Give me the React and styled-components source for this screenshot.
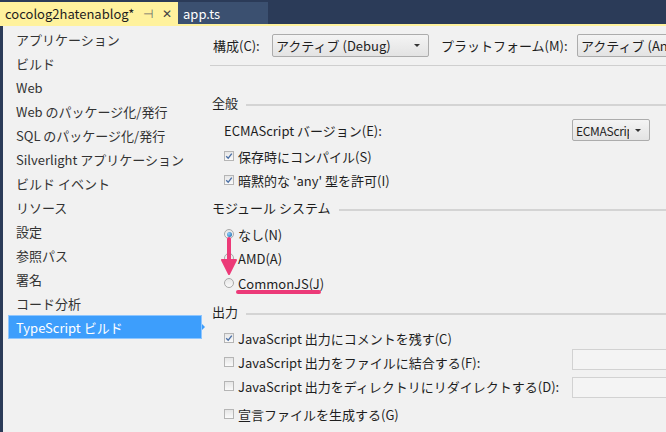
import React from "react";
import styled, { createGlobalStyle } from "styled-components";

const Global = createGlobalStyle`
  html, body { margin: 0; padding: 0; }
  body {
    width: 666px;
    height: 432px;
    overflow: hidden;
    background: #2b3b58;
    font-family: "Noto Sans CJK JP", "Noto Sans", sans-serif;
    font-size: 13px;
    color: #1e1e1e;
  }
`;

const Frame = styled.div`
  width: 666px;
  height: 432px;
  display: flex;
  flex-direction: column;
`;

const TabBar = styled.div`
  height: 24px;
  display: flex;
  align-items: flex-end;
  background: #2b3b58;
`;

const Tab = styled.div`
  height: 22px;
  display: flex;
  align-items: center;
  gap: 9px;
  padding: 0 8px 0 5px;
  background: ${(p) => (p.$active ? "#fff29d" : "#3b5070")};
  color: ${(p) => (p.$active ? "#1e1e1e" : "#ffffff")};
  width: ${(p) => p.$w}px;
  box-sizing: border-box;
  font-size: 13px;
`;

const TabTitle = styled.span`
  flex: 1;
  white-space: nowrap;
`;

const TabIcon = styled.span`
  color: ${(p) => p.$color || "#6a6a6a"};
  font-size: 12px;
  line-height: 1;
`;

const YellowRule = styled.div`
  height: 2px;
  background: #fff29d;
`;

const Body = styled.div`
  flex: 1;
  display: flex;
  background: #f1f1f1;
  border-left: 3px solid #2b3b58;
  min-height: 0;
`;

const Sidebar = styled.ul`
  list-style: none;
  margin: 0;
  padding: 1px 0 0 5px;
  width: 202px;
  flex: none;
`;

const SideItem = styled.li`
  position: relative;
  height: 24px;
  display: flex;
  align-items: center;
  padding-left: 7px;
  margin-right: 8px;
  white-space: nowrap;
  color: ${(p) => (p.$selected ? "#ffffff" : "#333333")};
  background: ${(p) => (p.$selected ? "#3d9efc" : "transparent")};
  border: 1px solid ${(p) => (p.$selected ? "#8ec6ff" : "transparent")};
  box-sizing: border-box;

  &::after {
    content: ${(p) => (p.$selected ? '""' : "none")};
    position: absolute;
    right: -4px;
    top: 50%;
    margin-top: -3px;
    border-left: 3px solid #3d9efc;
    border-top: 3px solid transparent;
    border-bottom: 3px solid transparent;
  }
`;

const Content = styled.div`
  flex: 1;
  display: flex;
  flex-direction: column;
  overflow: hidden;
`;

const Toolbar = styled.div`
  height: 39px;
  display: flex;
  align-items: center;
  padding-left: 3px;
  border-bottom: 1px solid #cfcfcf;
  white-space: nowrap;
  flex: none;
`;

const ToolLabel = styled.span`
  width: ${(p) => p.$w}px;
  flex: none;
`;

const Select = styled.div`
  width: ${(p) => p.$w}px;
  height: ${(p) => p.$h || 23}px;
  box-sizing: border-box;
  border: 1px solid #acacac;
  border-radius: 2px;
  background: linear-gradient(#f4f4f4, #e3e3e3);
  display: flex;
  align-items: center;
  padding-left: 3px;
  margin-right: ${(p) => p.$mr || 0}px;
  overflow: hidden;
  flex: none;
`;

const SelectText = styled.span`
  flex: 1;
  min-width: 0;
  white-space: nowrap;
  overflow: hidden;
  font-size: ${(p) => p.$fs || 13}px;
  letter-spacing: ${(p) => p.$ls || 0}px;
`;

const Caret = styled.span`
  width: 0;
  height: 0;
  margin: 0 8px 0 6px;
  border-left: 3px solid transparent;
  border-right: 3px solid transparent;
  border-top: 3px solid #333;
  flex: none;
`;

const Sections = styled.div`
  padding: 24px 0 0 2px;
  display: flex;
  flex-direction: column;
`;

const SectionHead = styled.div`
  height: 24px;
  margin-top: ${(p) => p.$mt || 0}px;
  display: flex;
  align-items: center;
  gap: 8px;
  white-space: nowrap;

  &::after {
    content: "";
    flex: 1;
    height: 2px;
    background: #d4d4d4;
    margin-top: 6px;
  }
`;

const Row = styled.div`
  height: 24px;
  margin-top: ${(p) => p.$mt || 0}px;
  display: flex;
  align-items: center;
  padding-left: 12px;
  white-space: nowrap;
`;

const RowLabel = styled.span`
  width: ${(p) => (p.$w ? p.$w + "px" : "auto")};
  flex: none;
  display: flex;
  align-items: center;
  gap: 4px;
`;

const Box = styled.span`
  width: 10px;
  height: 10px;
  box-sizing: border-box;
  border: 1px solid #b5b5b5;
  background: linear-gradient(#e6e6e6, #fafafa);
  display: inline-flex;
  align-items: center;
  justify-content: center;
  flex: none;
`;

const Round = styled(Box)`
  border-radius: 50%;
  border-color: #a8a8a8;
`;

const Dot = styled.span`
  width: 5px;
  height: 5px;
  border-radius: 50%;
  background: radial-gradient(circle at 35% 35%, #8fd0ff, #155f9f);
`;

const TextInput = styled.div`
  width: 100px;
  height: 21px;
  margin-top: ${(p) => p.$dy || 0}px;
  box-sizing: border-box;
  border: 1px solid #d2d2d2;
  background: #f4f4f4;
  flex: none;
`;

const RadioGroup = styled.div`
  position: relative;
  margin-top: 3px;
`;

const Annotation = styled.svg`
  position: absolute;
  left: 0;
  top: 0;
  pointer-events: none;
  overflow: visible;
`;

function Check({ on }) {
  return (
    <Box>
      {on && (
        <svg width="8" height="8" viewBox="0 0 8 8">
          <path d="M1.2 4.2 L3.2 6.2 L6.8 1.6" fill="none" stroke="#4a6fa5" strokeWidth="1.3" />
        </svg>
      )}
    </Box>
  );
}

function Radio({ on }) {
  return <Round>{on && <Dot />}</Round>;
}

const sideItems = [
  "アプリケーション",
  "ビルド",
  "Web",
  "Web のパッケージ化/発行",
  "SQL のパッケージ化/発行",
  "Silverlight アプリケーション",
  "ビルド イベント",
  "リソース",
  "設定",
  "参照パス",
  "署名",
  "コード分析",
  "TypeScript ビルド",
];

export default function App() {
  return (
    <Frame>
      <Global />
      <TabBar>
        <Tab $active $w={178}>
          <TabTitle>cocolog2hatenablog*</TabTitle>
          <TabIcon>⊣</TabIcon>
          <TabIcon $color="#444">✕</TabIcon>
        </Tab>
        <Tab $w={90}>
          <TabTitle>app.ts</TabTitle>
        </Tab>
      </TabBar>
      <YellowRule />
      <Body>
        <Sidebar>
          {sideItems.map((item) => (
            <SideItem key={item} $selected={item === "TypeScript ビルド"}>
              {item}
            </SideItem>
          ))}
        </Sidebar>
        <Content>
          <Toolbar>
            <ToolLabel $w={59}>構成(C):</ToolLabel>
            <Select $w={157} $mr={12}>
              <SelectText>アクティブ (Debug)</SelectText>
              <Caret />
            </Select>
            <ToolLabel $w={136}>プラットフォーム(M):</ToolLabel>
            <Select $w={120}>
              <SelectText>アクティブ (Any CPU)</SelectText>
            </Select>
          </Toolbar>
          <Sections>
            <SectionHead>全般</SectionHead>
            <Row $mt={4}>
              <RowLabel $w={348}>ECMAScript バージョン(E):</RowLabel>
              <Select $w={78} $h={22}>
                <SelectText $fs={12} $ls={-0.3}>ECMAScript 3</SelectText>
                <Caret />
              </Select>
            </Row>
            <Row $mt={2}>
              <RowLabel>
                <Check on />
                保存時にコンパイル(S)
              </RowLabel>
            </Row>
            <Row>
              <RowLabel>
                <Check on />
                暗黙的な 'any' 型を許可(I)
              </RowLabel>
            </Row>
            <SectionHead $mt={3}>モジュール システム</SectionHead>
            <RadioGroup>
              <Row>
                <RowLabel>
                  <Radio on />
                  なし(N)
                </RowLabel>
              </Row>
              <Row>
                <RowLabel>
                  <Radio />
                  AMD(A)
                </RowLabel>
              </Row>
              <Row $mt={1}>
                <RowLabel>
                  <Radio />
                  CommonJS(J)
                </RowLabel>
              </Row>
              <Annotation width="120" height="80">
                <path d="M17 17 L17 40" stroke="#ec3a78" strokeWidth="4" strokeLinecap="round" />
                <path d="M10 38 L24 38 L17 52 Z" fill="#ec3a78" stroke="#ec3a78" strokeWidth="2" strokeLinejoin="round" />
                <path d="M26 70 L107 70" stroke="#ec3a78" strokeWidth="4" strokeLinecap="round" />
              </Annotation>
            </RadioGroup>
            <SectionHead $mt={4}>出力</SectionHead>
            <Row $mt={3}>
              <RowLabel>
                <Check on />
                JavaScript 出力にコメントを残す(C)
              </RowLabel>
            </Row>
            <Row>
              <RowLabel $w={348}>
                <Check />
                JavaScript 出力をファイルに結合する(F):
              </RowLabel>
              <TextInput $dy={-5} />
            </Row>
            <Row>
              <RowLabel $w={348}>
                <Check />
                JavaScript 出力をディレクトリにリダイレクトする(D):
              </RowLabel>
              <TextInput $dy={3} />
            </Row>
            <Row $mt={4}>
              <RowLabel>
                <Check />
                宣言ファイルを生成する(G)
              </RowLabel>
            </Row>
          </Sections>
        </Content>
      </Body>
    </Frame>
  );
}
